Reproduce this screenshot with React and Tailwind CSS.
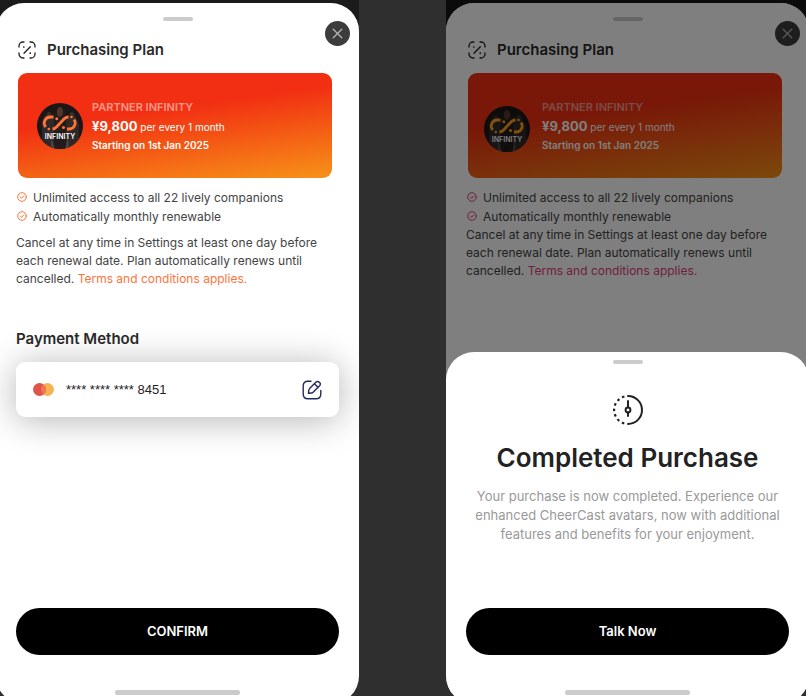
import { X } from 'lucide-react'

const FEATURES = ['Unlimited access to all 22 lively companions', 'Automatically monthly renewable']

function Handle() {
  return <div className="mx-auto h-1 w-[30px] shrink-0 rounded-full bg-[#cbcbcb]" />
}

function HomeBar() {
  return <div className="mx-auto mt-[35px] mb-[9px] h-[5px] w-[125px] shrink-0 rounded-full bg-[#cbcbcb]" />
}

function PlanIcon() {
  return (
    <svg viewBox="0 0 18 18" className="size-[18px]" fill="none" stroke="#222" strokeWidth="1.3" strokeLinecap="round">
      <path d="M1 6V5a4 4 0 0 1 4-4h1M12 1h1a4 4 0 0 1 4 4v1M17 12v1a4 4 0 0 1-4 4h-1M6 17H5a4 4 0 0 1-4-4v-1" />
      <path d="M6 12.3 12.3 5.7" />
      <path d="M5.8 6h.01M12.2 12.2h.01" strokeWidth="1.7" />
    </svg>
  )
}

function Avatar({ logo, dot }) {
  return (
    <svg viewBox="0 0 46 46" className="size-[46px] shrink-0">
      <defs>
        <clipPath id="disc"><circle cx="23" cy="23" r="23" /></clipPath>
      </defs>
      <g clipPath="url(#disc)">
        <rect width="46" height="46" fill="#1b1717" />
        <path d="M5 46V20q2-9 7-9t6 9l2 26z" fill="#2f2a2a" />
        <path d="M28 46V18q3-8 7-7t7 11v24z" fill="#2e2927" />
        <path d="M17 46V14q1-10 6-10t6 10v32z" fill="#231b1a" />
        <ellipse cx="23" cy="9" rx="3" ry="5" fill="#54362c" />
        <ellipse cx="12" cy="13" rx="2.5" ry="4" fill="#3d2c27" />
        <ellipse cx="35" cy="13" rx="2.5" ry="4" fill="#3d2c27" />
        <path d="M14 34l4 12h-4zM31 34l-3 12h4z" fill="#4a4548" />
      </g>
      <g fill="none" className={logo} strokeWidth="2.8">
        <path d="M8.800 24A6 6 0 0 1 13.500 14H16.500" />
        <path d="M15.500 26Q18 25.800 20 23.500l6-6.500Q28.500 14 31.500 14" />
        <path d="M37 16.500A6 6 0 0 1 32.500 26H30" />
      </g>
      <g className={dot}>
        <circle cx="11.800" cy="26" r="1.300" />
        <circle cx="19.800" cy="15.800" r="1.500" />
        <circle cx="26.500" cy="24.500" r="1.500" />
        <circle cx="34.500" cy="14" r="1.300" />
      </g>
      <text x="23" y="36" textAnchor="middle" fill="#fff" fontFamily="Inter, sans-serif" fontSize="7" fontWeight="600">
        INFINITY
      </text>
    </svg>
  )
}

function CheckIcon({ className }) {
  return (
    <svg viewBox="0 0 10 10" className={`mt-1 size-[10px] shrink-0 ${className}`} fill="none" stroke="currentColor" strokeLinecap="round">
      <circle cx="5" cy="5" r="4.300" />
      <path d="M3.300 5.100 4.500 6.300 6.800 3.900" />
    </svg>
  )
}

function PlanDetails({ accent, logo, dot, avatarBox, noteGap }) {
  return (
    <>
      <div className="mt-[18px] flex h-[22px] items-center gap-[11px] pl-0.5">
        <PlanIcon />
        <h2 className="text-[15px] font-semibold text-[#2a2a2a]">Purchasing Plan</h2>
      </div>

      <div className="mt-3 mr-[7px] ml-0.5 flex h-[105px] items-center rounded-[9px] bg-[linear-gradient(172deg,#f22f12_38%,#f79a18_105%)] pl-[19px] text-white">
        <div className={avatarBox}>
          <Avatar logo={logo} dot={dot} />
        </div>
        <div className="ml-[9px]">
          <p className="text-[11px] leading-[18px] font-semibold text-white/50">PARTNER INFINITY</p>
          <p className="text-[10px] leading-5">
            <span className="text-[13px] leading-5 font-bold">¥9,800</span> per every 1 month
          </p>
          <p className="text-[10px] leading-4 font-semibold">Starting on 1st Jan 2025</p>
        </div>
      </div>

      <ul className="mt-2.5 pl-px text-[12px] leading-[19px] text-[#444]">
        {FEATURES.map(text => (
          <li key={text} className="flex items-start gap-1.5">
            <CheckIcon className={accent} />
            {text}
          </li>
        ))}
      </ul>
      <p className={`text-[12px] leading-[18px] text-[#444] ${noteGap}`}>
        Cancel at any time in Settings at least one day before
        <br />
        each renewal date. Plan automatically renews until
        <br />
        cancelled. <a href="#terms" className={accent}>Terms and conditions applies.</a>
      </p>
    </>
  )
}

function CloseButton() {
  return (
    <button type="button" aria-label="Close" className="absolute top-[18px] right-[9px] flex size-[25px] items-center justify-center rounded-full bg-[#3c3c3c] text-[#b5b5b5]">
      <X size={17} strokeWidth={1.8} />
    </button>
  )
}

function Mastercard() {
  return (
    <svg viewBox="0 0 21 13" className="h-[13px] w-[21px]">
      <circle cx="14.500" cy="6.500" r="6.500" fill="#f5b355" />
      <circle cx="6.500" cy="6.500" r="6.500" fill="#e0544c" />
      <path d="M10.500 1.400a6.500 6.500 0 0 1 0 10.200a6.500 6.500 0 0 1 0-10.200" fill="#ee7a4a" />
    </svg>
  )
}

function EditIcon() {
  return (
    <svg viewBox="0 0 20 20" className="size-5" fill="none" stroke="#23285a" strokeWidth="1.400" strokeLinecap="round" strokeLinejoin="round">
      <path d="M9 1.200H6Q1.200 1.200 1.200 6v8Q1.200 18.800 6 18.800h8q4.800 0 4.800-4.800v-3.500" />
      <path d="M13.800 2.200 7.600 8.600q-.6.700-.8 1.600l-.4 3.100 3.100-.3q.9-.1 1.600-.8l6.500-6.400q1.500-1.700 0-3.300l-.3-.3q-1.700-1.500-3.500 0zM12.400 3.700l3.700 3.700" />
    </svg>
  )
}

function TimerIcon() {
  return (
    <svg viewBox="0 0 32 32" className="mx-auto size-8" fill="none" stroke="#222" strokeWidth="2">
      <path d="M16 2a14 14 0 0 1 0 28" strokeLinecap="round" />
      <path d="M12.400 2.500A14 14 0 0 0 12.400 29.500" strokeWidth="2.200" strokeDasharray="2.600 3" />
      <path d="M16 7v6.500M16 18.500V22" strokeLinecap="round" />
      <circle cx="16" cy="16" r="2.400" />
    </svg>
  )
}

function PurchaseScreen() {
  return (
    <section className="flex bg-[linear-gradient(#1b1b1b_50%,#2f2f2f_50%)] pt-[3px]">
      <div className="relative flex flex-1 flex-col overflow-hidden rounded-[28px] bg-white px-5 pt-[14px]">
        <Handle />
        <CloseButton />
        <PlanDetails
          accent="text-[#ff7338]"
          logo="stroke-[#ff7338]"
          dot="fill-[#ff7338]"
          avatarBox=""
          noteGap="mt-2"
        />

        <h3 className="mt-[39px] text-[15px] leading-6 font-semibold text-[#2a2a2a]">Payment Method</h3>
        <div className="mt-[11px] flex h-[55px] shrink-0 items-center rounded-[9px] bg-white px-[17px] shadow-[0_3px_36px_rgba(0,0,0,0.3)]">
          <Mastercard />
          <span className="ml-3 font-[Liberation_Sans,sans-serif] text-[13px] text-[#222]">**** **** **** 8451</span>
          <button type="button" aria-label="Edit payment method" className="ml-auto">
            <EditIcon />
          </button>
        </div>

        <button type="button" className="mt-auto h-[47px] shrink-0 rounded-full bg-black text-[13px] font-semibold text-white">
          CONFIRM
        </button>
        <HomeBar />
      </div>
    </section>
  )
}

function CompletedScreen() {
  return (
    <section className="relative flex bg-[linear-gradient(#0b0b0b_50%,#2f2f2f_50%)] pt-[3px]">
      <div className="relative flex flex-1 flex-col overflow-hidden rounded-[28px] bg-white px-5 pt-[14px]">
        <Handle />
        <CloseButton />
        <PlanDetails
          accent="text-[#e0407c]"
          logo="stroke-[#ffa01c]"
          dot="fill-[#ffa01c]"
          avatarBox="-ml-[3px] mr-[3px] mt-1.5"
          noteGap=""
        />
        <div className="absolute inset-0 bg-black/50" />
      </div>

      <div role="dialog" aria-labelledby="done" className="absolute inset-x-0 bottom-0 flex flex-col rounded-[28px] bg-white px-5 pt-2 text-center">
        <Handle />
        <div className="mt-[30px]">
          <TimerIcon />
        </div>
        <h1 id="done" className="mt-[14px] text-[26px] leading-9 font-semibold text-[#222]">Completed Purchase</h1>
        <p className="mt-[11px] text-[13px] leading-[19px] text-[#999]">
          Your purchase is now completed. Experience our
          <br />
          enhanced CheerCast avatars, now with additional
          <br />
          features and benefits for your enjoyment.
        </p>
        <button type="button" className="mt-16 h-[47px] rounded-full bg-black text-[13px] font-semibold text-white">
          Talk Now
        </button>
        <HomeBar />
      </div>
    </section>
  )
}

export default function App() {
  return (
    <main className="flex min-h-screen overflow-hidden bg-[#2f2f2f] font-[Inter,sans-serif]">
      <div className="-mr-[3px] -mb-2 -ml-1 grid flex-1 grid-cols-2 gap-[87px]">
        <PurchaseScreen />
        <CompletedScreen />
      </div>
    </main>
  )
}
